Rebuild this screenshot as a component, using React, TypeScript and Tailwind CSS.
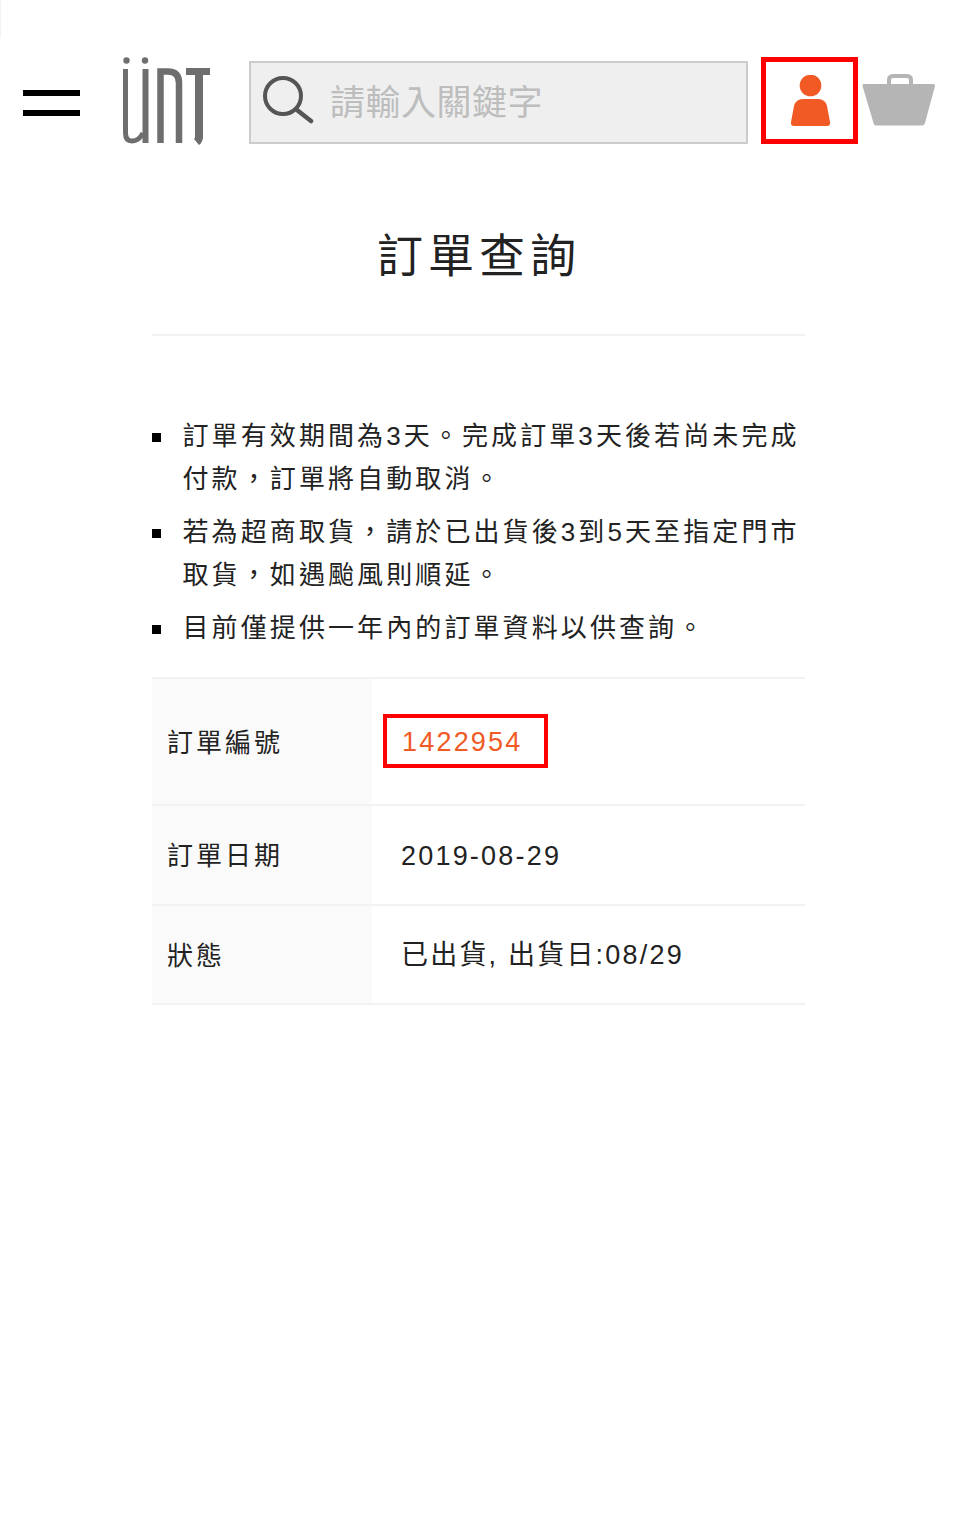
const FONT = "font-['Liberation_Sans','Noto_Sans_CJK_TC',sans-serif]";

const notes = [
  "訂單有效期間為3天。完成訂單3天後若尚未完成付款，訂單將自動取消。",
  "若為超商取貨，請於已出貨後3到5天至指定門市取貨，如遇颱風則順延。",
  "目前僅提供一年內的訂單資料以供查詢。",
];

function Logo() {
  return (
    <svg width="90" height="90" viewBox="0 0 90 90" fill="none" className="shrink-0">
      <circle cx="4.500" cy="3.500" r="3.200" fill="#6e6e6e" />
      <circle cx="23" cy="3.500" r="3.200" fill="#6e6e6e" />
      <path d="M3.500 12V76Q3.500 84 10 84Q17 84 21 76" stroke="#6e6e6e" strokeWidth="5" />
      <path d="M23.500 12V86" stroke="#6e6e6e" strokeWidth="6" />
      <path d="M38.500 86V14.500H46Q57 14.500 57 26V86" stroke="#6e6e6e" strokeWidth="6.500" />
      <path d="M64 14.500H88" stroke="#6e6e6e" strokeWidth="7" />
      <path d="M77 14V80Q77 83 74.500 85" stroke="#6e6e6e" strokeWidth="8" />
    </svg>
  );
}

function SearchIcon() {
  return (
    <svg width="52" height="52" viewBox="0 0 52 52" fill="none" stroke="#555555" className="shrink-0">
      <circle cx="21" cy="22" r="18" strokeWidth="4" />
      <path d="M35 36L49 47" strokeWidth="4.500" strokeLinecap="round" />
    </svg>
  );
}

function UserIcon() {
  return (
    <svg width="42" height="52" viewBox="0 0 42 52" className="ml-[3px]">
      <circle cx="20.500" cy="10.500" r="10.800" fill="#f15a24" />
      <path d="M13 24H28C33 24 36 27 37 31L40 47C40.300 50 39 51 37 51H4C2 51 .7 50 1 47L4 31C5 27 8 24 13 24Z" fill="#f15a24" />
    </svg>
  );
}

function BasketIcon() {
  return (
    <svg width="74" height="54" viewBox="0 0 74 54" className="shrink-0">
      <path d="M27 11V6Q27 2 31 2H45Q49 2 49 6V11" fill="none" stroke="#b5b5b5" strokeWidth="4" />
      <path d="M1.500 10H71.500Q73.500 10 73 12L63 49Q62 51.500 60 51.500H14Q12 51.500 11.500 49L.5 12Q.2 10 1.500 10Z" fill="#b5b5b5" />
    </svg>
  );
}

function Row({ label, className, children }: { label: string; className: string; children: React.ReactNode }) {
  return (
    <div className={`flex border-b-2 border-[#f2f2f2] ${className}`}>
      <div className="w-[220px] bg-[#fafafa] pl-[15px] pt-[3px] flex items-center text-[26px] tracking-[3px] text-[#222]">{label}</div>
      <div className="flex-1 flex items-center text-[27px] tracking-[2.200px] text-[#222]">{children}</div>
    </div>
  );
}

export default function App() {
  return (
    <div className={`relative w-[960px] h-[1530px] bg-white overflow-hidden ${FONT}`}>
      <div className="absolute left-0 top-0 w-px h-[38px] bg-[#f3f3f3]" />

      <header className="flex items-center pt-[57px] h-[144px]">
        <div className="ml-[23px] mt-[4px] w-[57px] flex flex-col gap-[14px] shrink-0">
          <div className="h-[6px] bg-black" />
          <div className="h-[6px] bg-black" />
        </div>
        <div className="ml-[42px] mt-[3px]">
          <Logo />
        </div>
        <div className="ml-[37px] mt-[4px] w-[499px] h-[83px] border-2 border-[#cccccc] bg-[#efefef] flex items-center shrink-0">
          <div className="ml-[11px] mb-[5px]">
            <SearchIcon />
          </div>
          <span className="ml-[16px] mt-[1px] text-[35px] text-[#bdbdbd] tracking-[0.500px]">請輸入關鍵字</span>
        </div>
        <div className="ml-[13px] w-[97px] h-[87px] border-[5px] border-[#ff0000] flex items-center justify-center shrink-0">
          <UserIcon />
        </div>
        <div className="ml-[4px]">
          <BasketIcon />
        </div>
      </header>

      <main className="ml-[152px] w-[653px]">
        <h1 className="mt-[79px] h-[66px] text-center text-[46px] leading-[66px] tracking-[5px] text-[#222] font-normal pl-[1px]">訂單查詢</h1>
        <div className="mt-[45px] h-[2px] bg-[#f2f2f2]" />

        <ul className="mt-[79px] text-[26px] leading-[43px] tracking-[3.100px] text-[#222] flex flex-col gap-[10px]">
          {notes.map((note) => (
            <li key={note} className="relative pl-[30.500px]">
              <span className="absolute left-0 top-[18px] w-[9px] h-[9px] bg-black" />
              {note}
            </li>
          ))}
        </ul>

        <div className="mt-[27px] border-t-2 border-[#f2f2f2]">
          <Row label="訂單編號" className="h-[127px]">
            <div className="ml-[11px] mt-[-2px] w-[165px] h-[54px] border-[4px] border-[#ff0000] flex items-center pl-[15px] pt-[4px] text-[#f15a24]">1422954</div>
          </Row>
          <Row label="訂單日期" className="h-[100px]">
            <span className="ml-[29px] mt-[2px]">2019-08-29</span>
          </Row>
          <Row label="狀態" className="h-[99px]">
            <span className="ml-[29px] mt-[2px]">已出貨, 出貨日:08/29</span>
          </Row>
        </div>
      </main>
    </div>
  );
}
